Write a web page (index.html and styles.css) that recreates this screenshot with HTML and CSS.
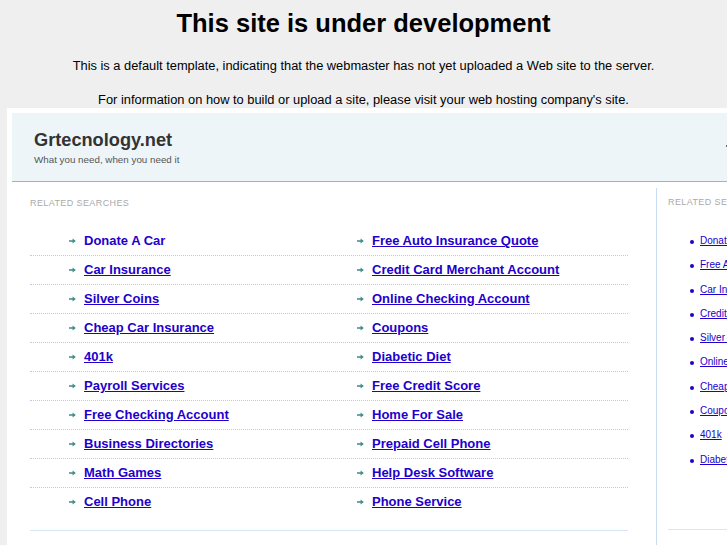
FILE: index.html
```html
<!DOCTYPE html>
<html>
<head>
<meta charset="utf-8">
<title>This site is under development</title>
<link rel="stylesheet" href="styles.css">
</head>
<body>
<div class="page">
  <h1 class="title">This site is under development</h1>
  <p class="note note-first">This is a default template, indicating that the webmaster has not yet uploaded a Web site to the server.</p>
  <p class="note note-second">For information on how to build or upload a site, please visit your web hosting company's site.</p>

  <div class="frame">
    <div class="site-header">
      <div class="brand">
        <div class="brand-name">Grtecnology.net</div>
        <div class="brand-tag">What you need, when you need it</div>
      </div>
      <span class="header-mark"></span>
    </div>

    <div class="content">
      <div class="main-col">
        <div class="label">Related Searches</div>
        <ul class="rows">
          <li class="row">
            <span class="item"><svg class="arrow" viewBox="0 0 7 6"><path d="M0 2.2h3.6V0.4L6.8 3 3.6 5.6V3.8H0z"/></svg><a class="link plain" href="#">Donate A Car</a></span>
            <span class="item"><svg class="arrow" viewBox="0 0 7 6"><path d="M0 2.2h3.6V0.4L6.8 3 3.6 5.6V3.8H0z"/></svg><a class="link" href="#">Free Auto Insurance Quote</a></span>
          </li>
          <li class="row">
            <span class="item"><svg class="arrow" viewBox="0 0 7 6"><path d="M0 2.2h3.6V0.4L6.8 3 3.6 5.6V3.8H0z"/></svg><a class="link" href="#">Car Insurance</a></span>
            <span class="item"><svg class="arrow" viewBox="0 0 7 6"><path d="M0 2.2h3.6V0.4L6.8 3 3.6 5.6V3.8H0z"/></svg><a class="link" href="#">Credit Card Merchant Account</a></span>
          </li>
          <li class="row">
            <span class="item"><svg class="arrow" viewBox="0 0 7 6"><path d="M0 2.2h3.6V0.4L6.8 3 3.6 5.6V3.8H0z"/></svg><a class="link" href="#">Silver Coins</a></span>
            <span class="item"><svg class="arrow" viewBox="0 0 7 6"><path d="M0 2.2h3.6V0.4L6.8 3 3.6 5.6V3.8H0z"/></svg><a class="link" href="#">Online Checking Account</a></span>
          </li>
          <li class="row">
            <span class="item"><svg class="arrow" viewBox="0 0 7 6"><path d="M0 2.2h3.6V0.4L6.8 3 3.6 5.6V3.8H0z"/></svg><a class="link" href="#">Cheap Car Insurance</a></span>
            <span class="item"><svg class="arrow" viewBox="0 0 7 6"><path d="M0 2.2h3.6V0.4L6.8 3 3.6 5.6V3.8H0z"/></svg><a class="link" href="#">Coupons</a></span>
          </li>
          <li class="row">
            <span class="item"><svg class="arrow" viewBox="0 0 7 6"><path d="M0 2.2h3.6V0.4L6.8 3 3.6 5.6V3.8H0z"/></svg><a class="link" href="#">401k</a></span>
            <span class="item"><svg class="arrow" viewBox="0 0 7 6"><path d="M0 2.2h3.6V0.4L6.8 3 3.6 5.6V3.8H0z"/></svg><a class="link" href="#">Diabetic Diet</a></span>
          </li>
          <li class="row">
            <span class="item"><svg class="arrow" viewBox="0 0 7 6"><path d="M0 2.2h3.6V0.4L6.8 3 3.6 5.6V3.8H0z"/></svg><a class="link" href="#">Payroll Services</a></span>
            <span class="item"><svg class="arrow" viewBox="0 0 7 6"><path d="M0 2.2h3.6V0.4L6.8 3 3.6 5.6V3.8H0z"/></svg><a class="link" href="#">Free Credit Score</a></span>
          </li>
          <li class="row">
            <span class="item"><svg class="arrow" viewBox="0 0 7 6"><path d="M0 2.2h3.6V0.4L6.8 3 3.6 5.6V3.8H0z"/></svg><a class="link" href="#">Free Checking Account</a></span>
            <span class="item"><svg class="arrow" viewBox="0 0 7 6"><path d="M0 2.2h3.6V0.4L6.8 3 3.6 5.6V3.8H0z"/></svg><a class="link" href="#">Home For Sale</a></span>
          </li>
          <li class="row">
            <span class="item"><svg class="arrow" viewBox="0 0 7 6"><path d="M0 2.2h3.6V0.4L6.8 3 3.6 5.6V3.8H0z"/></svg><a class="link" href="#">Business Directories</a></span>
            <span class="item"><svg class="arrow" viewBox="0 0 7 6"><path d="M0 2.2h3.6V0.4L6.8 3 3.6 5.6V3.8H0z"/></svg><a class="link" href="#">Prepaid Cell Phone</a></span>
          </li>
          <li class="row">
            <span class="item"><svg class="arrow" viewBox="0 0 7 6"><path d="M0 2.2h3.6V0.4L6.8 3 3.6 5.6V3.8H0z"/></svg><a class="link" href="#">Math Games</a></span>
            <span class="item"><svg class="arrow" viewBox="0 0 7 6"><path d="M0 2.2h3.6V0.4L6.8 3 3.6 5.6V3.8H0z"/></svg><a class="link" href="#">Help Desk Software</a></span>
          </li>
          <li class="row">
            <span class="item"><svg class="arrow" viewBox="0 0 7 6"><path d="M0 2.2h3.6V0.4L6.8 3 3.6 5.6V3.8H0z"/></svg><a class="link" href="#">Cell Phone</a></span>
            <span class="item"><svg class="arrow" viewBox="0 0 7 6"><path d="M0 2.2h3.6V0.4L6.8 3 3.6 5.6V3.8H0z"/></svg><a class="link" href="#">Phone Service</a></span>
          </li>
        </ul>
        <div class="col-end"></div>
      </div>

      <div class="side-col">
        <div class="label">Related Searches</div>
        <ul class="side-list">
          <li><a class="side-link" href="#">Donate A Car</a></li>
          <li><a class="side-link" href="#">Free Auto Insurance Quote</a></li>
          <li><a class="side-link" href="#">Car Insurance</a></li>
          <li><a class="side-link" href="#">Credit Card Merchant Account</a></li>
          <li><a class="side-link" href="#">Silver Coins</a></li>
          <li><a class="side-link" href="#">Online Checking Account</a></li>
          <li><a class="side-link" href="#">Cheap Car Insurance</a></li>
          <li><a class="side-link" href="#">Coupons</a></li>
          <li><a class="side-link" href="#">401k</a></li>
          <li><a class="side-link" href="#">Diabetic Diet</a></li>
        </ul>
        <div class="col-end"></div>
      </div>
    </div>
  </div>
</div>
</body>
</html>
```

FILE: styles.css
```css
html, body {
  margin: 0;
  padding: 0;
}

body {
  background: #efefef;
  font-family: "Liberation Sans", Arial, sans-serif;
  width: 727px;
  height: 545px;
  overflow: hidden;
}

.page {
  width: 727px;
}

.title {
  margin: 8px 0 0;
  font-size: 25.5px;
  line-height: 30px;
  font-weight: bold;
  color: #000;
  text-align: center;
}

.note {
  margin: 0;
  font-size: 12.85px;
  line-height: 16px;
  color: #000;
  text-align: center;
  white-space: nowrap;
}

.note-first {
  margin-top: 20px;
}

.note-second {
  margin-top: 18px;
}

.frame {
  margin-left: 7px;
  width: 880px;
  height: 500px;
  background: #fff;
  padding: 5px 0 0 5px;
}

.site-header {
  display: flex;
  align-items: flex-start;
  height: 68px;
  background: #eef5f8;
  border-bottom: 1px solid #92b2e6;
}

.brand {
  width: 714px;
  flex: none;
  padding: 16px 0 0 22px;
  box-sizing: border-box;
}

.brand-name {
  font-size: 18.2px;
  line-height: 22px;
  font-weight: bold;
  color: #333;
}

.brand-tag {
  margin-top: 3px;
  font-size: 9.8px;
  line-height: 12px;
  color: #555;
}

.header-mark {
  margin-top: 32px;
  width: 3px;
  height: 2px;
  background: #666;
}

.content {
  display: flex;
  align-items: flex-start;
}

.main-col {
  width: 644px;
  flex: none;
  box-sizing: border-box;
  padding: 16px 28px 0 18px;
}

.label {
  font-size: 9px;
  line-height: 11px;
  color: #aaa;
  text-transform: uppercase;
  letter-spacing: 0.4px;
  white-space: nowrap;
}

.rows {
  list-style: none;
  margin: 18px 0 0;
  padding: 0;
}

.row {
  display: grid;
  grid-template-columns: 288px 1fr;
  padding: 5px 0 6px 39px;
  line-height: 17px;
  border-bottom: 1px dotted #b8cce8;
}

.row:last-child {
  border-bottom: none;
}

.item {
  display: flex;
  align-items: center;
  white-space: nowrap;
}

.arrow {
  width: 7px;
  height: 6px;
  margin-right: 8px;
  fill: #3d8c84;
  flex: none;
}

.link {
  font-size: 13px;
  font-weight: bold;
  color: #2200cc;
  text-decoration: underline;
}

.link.plain {
  text-decoration: none;
}

.col-end {
  margin-top: 14px;
  border-top: 1px solid #d6e6f6;
}

.side-col {
  width: 220px;
  flex: none;
  margin-top: 6px;
  height: 400px;
  border-left: 1px solid #c9dcf2;
  padding: 9px 0 0 11px;
  box-sizing: border-box;
}

.side-list {
  margin: 26px 0 0;
  padding: 0 0 0 32px;
  list-style: none;
}

.side-list li {
  position: relative;
  height: 24.3px;
  line-height: 14px;
  font-size: 10px;
  white-space: nowrap;
}

.side-list li::before {
  content: "";
  position: absolute;
  left: -10px;
  top: 6px;
  width: 4px;
  height: 4px;
  border-radius: 50%;
  background: #2200cc;
}

.side-link {
  color: #2200cc;
  text-decoration: underline;
}

.side-col .col-end {
  margin-top: 52px;
}
```
